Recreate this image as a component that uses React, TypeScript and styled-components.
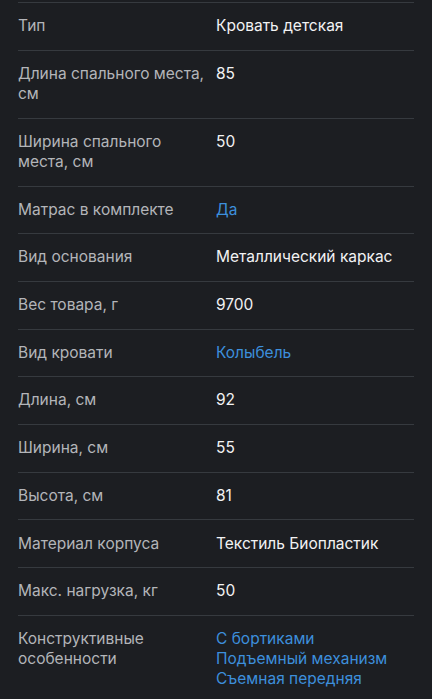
import styled, { createGlobalStyle } from 'styled-components'

const GlobalStyle = createGlobalStyle`
  html, body {
    margin: 0;
    padding: 0;
    background: #1c1e22;
  }

  body {
    font-family: Inter, 'Noto Sans', sans-serif;
    -webkit-font-smoothing: antialiased;
  }
`

const Page = styled.div`
  min-height: 699px;
  padding: 2px 18px 0;
  box-sizing: border-box;
  background: #1c1e22;
`

const List = styled.dl`
  margin: 0;
  padding: 0;
`

const Row = styled.div`
  display: grid;
  grid-template-columns: 198px 1fr;
  padding: 13.2px 0 13.2px;
  border-top: 1px solid #363a3f;
  font-size: 15.5px;
  line-height: 20.3px;
`

const Term = styled.dt`
  margin: 0;
  color: #b3b5b9;
  padding-right: 6px;
`

const Value = styled.dd<{ $link?: boolean }>`
  margin: 0;
  color: ${({ $link }) => ($link ? '#3d8fdc' : '#f2f2f3')};
  display: flex;
  flex-direction: column;
`

interface Spec {
  label: string
  values: string[]
  link?: boolean
}

const specs: Spec[] = [
  { label: 'Тип', values: ['Кровать детская'] },
  { label: 'Длина спального места, см', values: ['85'] },
  { label: 'Ширина спального места, см', values: ['50'] },
  { label: 'Матрас в комплекте', values: ['Да'], link: true },
  { label: 'Вид основания', values: ['Металлический каркас'] },
  { label: 'Вес товара, г', values: ['9700'] },
  { label: 'Вид кровати', values: ['Колыбель'], link: true },
  { label: 'Длина, см', values: ['92'] },
  { label: 'Ширина, см', values: ['55'] },
  { label: 'Высота, см', values: ['81'] },
  { label: 'Материал корпуса', values: ['Текстиль Биопластик'] },
  { label: 'Макс. нагрузка, кг', values: ['50'] },
  {
    label: 'Конструктивные особенности',
    values: ['С бортиками', 'Подъемный механизм', 'Съемная передняя'],
    link: true,
  },
]

function App(): JSX.Element {
  return (
    <Page>
      <GlobalStyle />
      <List>
        {specs.map((spec) => (
          <Row key={spec.label}>
            <Term>{spec.label}</Term>
            <Value $link={spec.link}>
              {spec.values.map((v) => (
                <span key={v}>{v}</span>
              ))}
            </Value>
          </Row>
        ))}
      </List>
    </Page>
  )
}

export default App
